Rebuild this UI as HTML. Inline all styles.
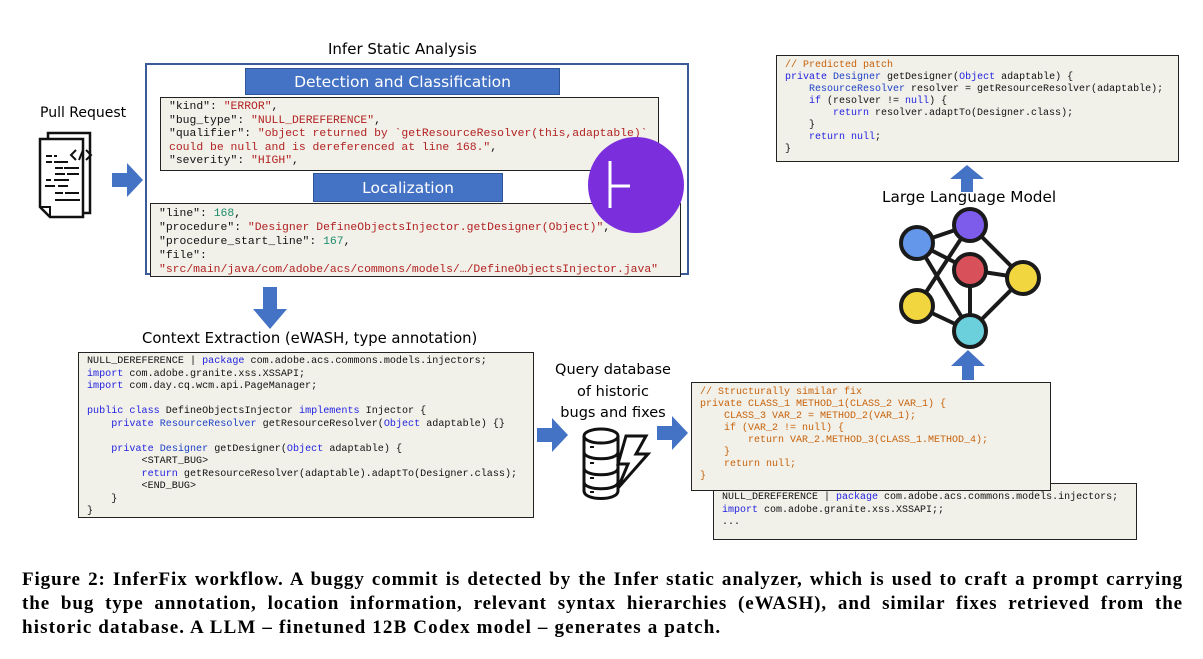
<!DOCTYPE html>
<html><head><meta charset="utf-8"><style>
body{margin:0;width:1203px;height:659px;background:#fff;position:relative;overflow:hidden;font-family:"Liberation Sans",sans-serif}
.a{position:absolute}
.t{position:absolute;font-family:"DejaVu Sans","Liberation Sans",sans-serif;color:#000;white-space:nowrap}
.hdr{position:absolute;background:#4472c4;color:#fff;font-family:"DejaVu Sans",sans-serif;font-size:15.5px;text-align:center;border:1px solid #2f5597;box-sizing:border-box}
.code{position:absolute;background:#f1f0e9;border:1.5px solid #222;box-sizing:border-box;font-family:"Liberation Mono",monospace;white-space:pre;color:#111}
.r{color:#b22222}.g{color:#1a8a6a}.b{color:#2323e0}.o{color:#c8620a}.k{color:#1e40c8}
.cap{position:absolute;left:22px;top:568px;width:1161px;font-family:"Liberation Serif",serif;font-weight:bold;font-size:19px;line-height:24px;color:#000;letter-spacing:0.9px}
.cap div{text-align:justify;text-align-last:justify;white-space:nowrap}
.cap div.l{text-align-last:left;letter-spacing:1.15px}
</style></head><body>
<div class="t" style="left:328px;top:40px;font-size:15px">Infer Static Analysis</div>
<div class="a" style="left:145px;top:63px;width:540px;height:208px;border:2px solid #3a5a9a"></div>
<div class="hdr" style="left:245px;top:68px;width:315px;height:27px;line-height:27px">Detection and Classification</div>
<div class="code" style="left:160px;top:97px;width:499px;height:74px;padding:3px 0 0 8px;font-size:11.4px;line-height:13.6px">"kind": <span class="r">"ERROR"</span>,
"bug_type": <span class="r">"NULL_DEREFERENCE"</span>,
"qualifier": <span class="r">"object returned by `getResourceResolver(this,adaptable)`
could be null and is dereferenced at line 168."</span>,
"severity": <span class="r">"HIGH"</span>,</div>
<div class="hdr" style="left:313px;top:173px;width:190px;height:29px;line-height:29px">Localization</div>
<div class="code" style="left:150px;top:203px;width:531px;height:74px;padding:3px 0 0 8px;font-size:11.4px;line-height:14px">"line": <span class="g">168</span>,
"procedure": <span class="r">"Designer DefineObjectsInjector.getDesigner(Object)"</span>,
"procedure_start_line": <span class="g">167</span>,
"file":
<span class="r">"src/main/java/com/adobe/acs/commons/models/…/DefineObjectsInjector.java"</span></div>
<svg class="a" style="left:0;top:0" width="1203" height="659">
<circle cx="636" cy="185" r="48" fill="#7b2fdc"/>
<path d="M610 161V208M610 186H630" stroke="#fff" stroke-width="3" fill="none"/>
<path d="M112 173h15v-10l16 17-16 17v-10h-15z" fill="#4472c4"/>
<path d="M263 287h14v22h10l-17 20-17-20h10z" fill="#4472c4"/>
<path d="M537 428h15v-10l16 17-16 17v-10h-15z" fill="#4472c4"/>
<path d="M657 426h15v-10l16 17-16 17v-10h-15z" fill="#4472c4"/>
<path d="M962 380v-14h-11l17-16 17 16h-11v14z" fill="#4472c4"/>
<path d="M961 192v-13h-11l17-14 17 14h-11v13z" fill="#4472c4"/>
<g fill="#fff" stroke="#111" stroke-width="2.5">
<path d="M48 133h42v80h-42z"/>
<path d="M40 139h43v78h-33l-10-10z"/>
</g>
<path d="M40 207h10v10" fill="none" stroke="#111" stroke-width="2"/>
<g stroke="#111" stroke-width="2" fill="none">
<path d="M76 150l-5 5 5 5M79 160l4-10M86 150l5 5-5 5"/>
<path d="M46 156h6M54 156h3M46 162h6M54 162h14M55 168h8M64 168h15M55 174h10M67 174h12M46 180h5M54 180h15M45 186h10M58 186h10M55 193h8M65 193h14M55 200h25"/>
</g>
<g fill="#fff" stroke="#111" stroke-width="3">
<path d="M584 436v55c0 10 34 10 34 0v-55"/>
<ellipse cx="601" cy="436" rx="17" ry="7"/>
<path d="M584 452c0 9 34 9 34 0M584 468c0 9 34 9 34 0M584 482c0 9 34 9 34 0"/>
<path d="M626 436h20l-10 18h12l-30 34 10-24h-10z"/>
</g>
<g stroke="#111" stroke-width="2"><path d="M590 447h4M590 463h4M590 478h4M590 492h4"/></g>
<g stroke="#1a1a1a" stroke-width="4">
<path d="M917 243L970 225M917 243L970 270M917 243L970 331M970 225L917 306M970 225L1023 278M970 270L1023 278M970 270L970 331M1023 278L970 331M917 306L970 331"/>
<circle cx="970" cy="225" r="16" fill="#7d5cec"/>
<circle cx="917" cy="243" r="16" fill="#6497ea"/>
<circle cx="970" cy="270" r="16" fill="#d8505a"/>
<circle cx="1023" cy="278" r="16" fill="#f2d640"/>
<circle cx="917" cy="306" r="16" fill="#f2d640"/>
<circle cx="970" cy="331" r="16" fill="#6ccfdc"/>
</g>
</svg>
<div class="t" style="left:40px;top:105px;font-size:14px">Pull Request</div>
<div class="t" style="left:142px;top:330px;font-size:14.8px">Context Extraction (eWASH, type annotation)</div>
<div class="code" style="left:78px;top:352px;width:456px;height:166px;padding:3px 0 0 8px;font-size:10.1px;line-height:12.5px">NULL_DEREFERENCE | <span class="b">package</span> com.adobe.acs.commons.models.injectors;
<span class="b">import</span> com.adobe.granite.xss.XSSAPI;
<span class="b">import</span> com.day.cq.wcm.api.PageManager;

<span class="b">public class</span> DefineObjectsInjector <span class="b">implements</span> Injector {
    <span class="b">private</span> <span class="k">ResourceResolver</span> getResourceResolver(<span class="b">Object</span> adaptable) {}

    <span class="b">private</span> <span class="k">Designer</span> getDesigner(<span class="b">Object</span> adaptable) {
         &lt;START_BUG&gt;
         <span class="b">return</span> getResourceResolver(adaptable).adaptTo(Designer.class);
         &lt;END_BUG&gt;
    }
}</div>
<div class="t" style="left:553px;top:360px;font-size:14.5px;text-align:center;width:120px;line-height:21.5px">Query database<br>of historic<br>bugs and fixes</div>
<div class="code" style="left:713px;top:483px;width:424px;height:57px;padding:8px 0 0 8px;font-size:10px;line-height:12.5px">NULL_DEREFERENCE | <span class="b">package</span> com.adobe.acs.commons.models.injectors;
<span class="b">import</span> com.adobe.granite.xss.XSSAPI;;
...</div>
<div class="code" style="left:691px;top:382px;width:360px;height:109px;padding:4px 0 0 8px;font-size:10px;line-height:12px;color:#c8620a">// Structurally similar fix
private CLASS_1 METHOD_1(CLASS_2 VAR_1) {
    CLASS_3 VAR_2 = METHOD_2(VAR_1);
    if (VAR_2 != null) {
        return VAR_2.METHOD_3(CLASS_1.METHOD_4);
    }
    return null;
}</div>
<div class="t" style="left:882px;top:188px;font-size:15.3px">Large Language Model</div>
<div class="code" style="left:776px;top:55px;width:403px;height:107px;padding:4px 0 0 8px;font-size:10px;line-height:12px"><span class="o">// Predicted patch</span>
<span class="b">private</span> <span class="k">Designer</span> getDesigner(<span class="b">Object</span> adaptable) {
    <span class="k">ResourceResolver</span> resolver = getResourceResolver(adaptable);
    <span class="b">if</span> (resolver != <span class="b">null</span>) {
        <span class="b">return</span> resolver.adaptTo(Designer.class);
    }
    <span class="b">return null</span>;
}</div>
<div class="cap">
<div>Figure 2: InferFix workflow. A buggy commit is detected by the Infer static analyzer, which is used to craft a prompt carrying</div>
<div>the bug type annotation, location information, relevant syntax hierarchies (eWASH), and similar fixes retrieved from the</div>
<div class="l">historic database. A LLM – finetuned 12B Codex model – generates a patch.</div>
</div>
</body></html>
